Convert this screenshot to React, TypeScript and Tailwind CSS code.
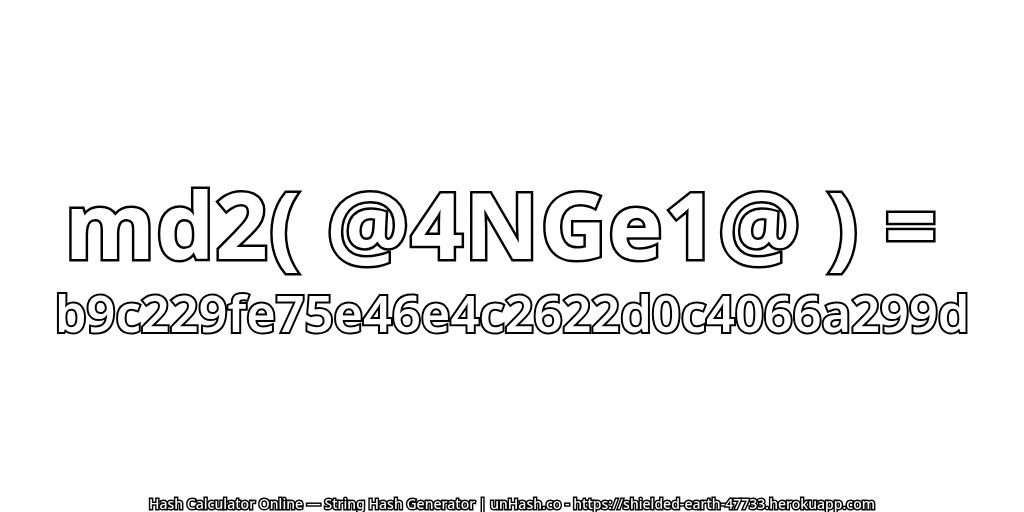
export default function App() {
  return (
    <div className="w-[1024px] h-[512px] bg-white flex flex-col items-center overflow-hidden font-['Noto_Sans','DejaVu_Sans',sans-serif] text-white">
      <div className="mt-[167px] h-[113px] pr-[20px] will-change-transform flex items-center justify-center whitespace-nowrap text-[92px] font-bold leading-none tracking-[1.2px] [-webkit-text-stroke:5px_#000] [paint-order:stroke_fill]">
        {"md2( @4NGe1@ ) ="}
      </div>
      <div className="mt-[3px] h-[60px] will-change-transform flex items-center justify-center whitespace-nowrap text-[50.5px] font-semibold leading-none [-webkit-text-stroke:4px_#000] [paint-order:stroke_fill]">
        b9c229fe75e46e4c2622d0c4066a299d
      </div>
      <div className="mt-auto h-[16px] will-change-transform flex items-center whitespace-nowrap text-[14px] font-medium tracking-[0.03px] leading-none [-webkit-text-stroke:3px_#000] [paint-order:stroke_fill]">
        Hash Calculator Online — String Hash Generator | unHash.co - https://shielded-earth-47733.herokuapp.com
      </div>
    </div>
  );
}
